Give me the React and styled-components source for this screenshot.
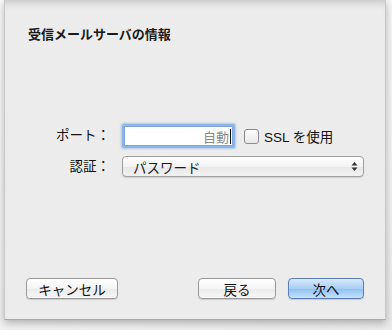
import React from 'react'
import styled, { createGlobalStyle } from 'styled-components'

const GlobalStyle = createGlobalStyle`
    html, body {
        margin: 0;
        padding: 0;
        background: #f7f7f7;
        width: 392px;
        height: 330px;
        overflow: hidden;
        font-family: "Liberation Sans", "Noto Sans CJK JP", sans-serif;
        font-size: 13px;
        color: #1a1a1a;
    }
`;

const Backdrop = styled.div`
    width: 392px;
    height: 330px;
    padding-left: 4px;
    box-sizing: border-box;
    background: linear-gradient(160deg, #fafafa 0%, #f4f4f4 60%, #ebebeb 100%);
`;

const Sheet = styled.div`
    width: 382px;
    height: 320px;
    box-sizing: border-box;
    background: #ececec;
    border-left: 1px solid #c9c9c9;
    border-right: 1px solid #c9c9c9;
    border-bottom: 1px solid #a9a9a9;
    box-shadow: 0 3px 8px rgba(0, 0, 0, 0.28), inset 0 8px 8px -6px rgba(0, 0, 0, 0.18);
    display: flex;
    flex-direction: column;
    padding: 27px 21px 20px 20px;
`;

const Title = styled.div`
    font-weight: bold;
    font-size: 13px;
    line-height: 16px;
    padding-left: 3px;
`;

const Form = styled.div`
    display: grid;
    grid-template-columns: 85px auto;
    column-gap: 12px;
    row-gap: 8px;
    align-items: center;
    margin-top: 81px;
`;

const Label = styled.div`
    text-align: right;
    line-height: 16px;
    font-size: 13.5px;
    color: #111;
`;

const Inline = styled.div`
    display: flex;
    align-items: center;
    gap: 9px;
`;

const TextField = styled.div`
    width: 109px;
    height: 20px;
    box-sizing: border-box;
    background: #fff;
    border: 1px solid #7fa7d6;
    box-shadow: 0 0 0 2px #8ab6ea, 0 0 2px 3px rgba(110, 160, 220, 0.5);
    border-radius: 1px;
    margin: 2px;
    display: flex;
    align-items: center;
    justify-content: flex-end;
    padding-right: 1px;
    color: #8a8a8a;
    font-size: 13px;
`;

const Caret = styled.span`
    display: inline-block;
    width: 1px;
    height: 15px;
    background: #111;
    margin-left: 1px;
`;

const Check = styled.label`
    display: flex;
    align-items: center;
    gap: 5px;
    font-size: 13.5px;
    color: #111;
`;

const Box = styled.span`
    width: 13px;
    height: 13px;
    border: 1px solid #8c8c8c;
    border-radius: 3px;
    background: linear-gradient(#fdfdfd, #e9e9e9);
`;

const Popup = styled.div`
    width: 242px;
    height: 21px;
    box-sizing: border-box;
    border: 1px solid #a0a0a0;
    border-radius: 4px;
    background: linear-gradient(#ffffff, #f3f3f3 50%, #e8e8e8 51%, #f1f1f1);
    box-shadow: 0 1px 1px rgba(0, 0, 0, 0.12);
    display: flex;
    align-items: center;
    justify-content: space-between;
    padding: 0 5px 0 10px;
    font-size: 13.5px;
`;

const Arrows = styled.svg`
    width: 7px;
    height: 11px;
`;

const Footer = styled.div`
    margin-top: auto;
    display: flex;
    align-items: center;
    padding-left: 1px;
`;

const Button = styled.button`
    height: 21px;
    width: ${(p) => p.w}px;
    margin-left: ${(p) => p.gap || 0}px;
    box-sizing: border-box;
    border: 1px solid ${(p) => (p.primary ? '#5a7fb8' : '#9a9a9a')};
    border-radius: 4px;
    font-family: inherit;
    font-size: 13.5px;
    color: #111;
    padding: 0;
    background: ${(p) =>
        p.primary
            ? 'linear-gradient(#d8e9fb, #a9cdf5 50%, #8fc0f2 51%, #c4e2fd)'
            : 'linear-gradient(#ffffff, #f4f4f4 50%, #ebebeb 51%, #f6f6f6)'};
    box-shadow: 0 1px 1px rgba(0, 0, 0, 0.15);
`;

const Spacer = styled.div`
    flex: 1;
`;

export default function App() {
    return (
        <>
            <GlobalStyle />
            <Backdrop>
                <Sheet>
                    <Title>受信メールサーバの情報</Title>
                    <Form>
                        <Label>ポート：</Label>
                        <Inline>
                            <TextField>
                                自動<Caret />
                            </TextField>
                            <Check>
                                <Box />
                                SSL を使用
                            </Check>
                        </Inline>
                        <Label>認証：</Label>
                        <Popup>
                            <span>パスワード</span>
                            <Arrows viewBox="0 0 7 11">
                                <path d="M3.5 1 L6.5 4.5 H0.5 Z" fill="#333" />
                                <path d="M3.5 10 L6.5 6.5 H0.5 Z" fill="#333" />
                            </Arrows>
                        </Popup>
                    </Form>
                    <Footer>
                        <Button w={92}>キャンセル</Button>
                        <Spacer />
                        <Button w={78}>戻る</Button>
                        <Button w={76} gap={12} primary>
                            次へ
                        </Button>
                    </Footer>
                </Sheet>
            </Backdrop>
        </>
    )
}
